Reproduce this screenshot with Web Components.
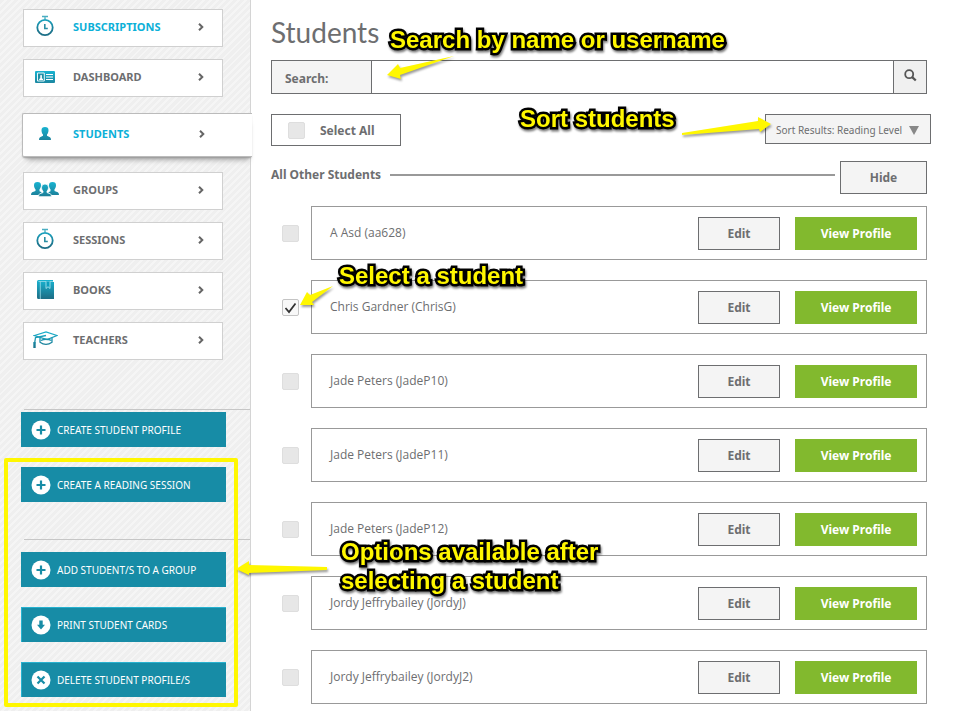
<!DOCTYPE html>
<html lang="en">
<head>
<meta charset="utf-8">
<title>Students</title>
<style>
  body {
    margin: 0;
    background: #fff;
    color: #6d6e70;
    font-family: "Noto Sans", sans-serif;
    font-size: 11px;
  }
</style>
</head>
<body>
<students-page></students-page>

<script>
const icons = {
  stopwatch: `<svg width="20" height="24" viewBox="0 0 20 24" fill="none" stroke="url(#g)">
    <path d="M7 1.5h6" stroke="#4aaec2" stroke-width="1.5"/><path d="M10 2v2" stroke="#7fc5d2" stroke-width="2"/>
    <circle cx="10" cy="12.5" r="7.7" stroke-width="1.8"/><path d="M9.8 9v4.5h3" stroke="#2a8ea3" stroke-width="1.6"/></svg>`,
  card: `<svg width="20" height="12" viewBox="0 0 20 12"><rect width="20" height="12" rx="1" fill="url(#g)"/>
    <path d="M2.5 2h6.8v8H2.5z" fill="#1b8fa6" stroke="#e6f7fa"/>
    <path d="M4.2 9V8l1.1-.7V4.6Q6 3 6.9 4.6v2.7L8 8v1z" fill="#fff"/>
    <path d="M11 3.5h7M11 6h7M11 8.5h7" stroke="#fff"/></svg>`,
  person: `<svg width="12" height="13" viewBox="0 0 12 13"><path fill="url(#g)" d="M2.500 3.200Q2.500 0 6 0t3.500 3.200C9.500 5.600 8.600 6.800 8 7.500v1.300l3 1.400q1 .6 1 2.800H0q0-2.200 1-2.800l3-1.400V7.500C3.400 6.800 2.500 5.600 2.500 3.200z"/></svg>`,
  group: `<svg width="28" height="15" viewBox="0 0 28 15" fill="url(#g)">
    <path d="M3 3.200Q3 0 6.500 0t3.500 3.200c0 2.300-.9 3.300-1.500 4v2l2 1V13H0q0-2.400 1.200-2.800l3.300-1.300V7.200C3.900 6.500 3 5.500 3 3.200z"/>
    <path d="M25 3.200Q25 0 21.500 0T18 3.200c0 2.300.9 3.300 1.500 4v2l-2 1V13H28q0-2.400-1.200-2.800l-3.300-1.300V7.200c.6-.7 1.500-1.700 1.500-4z"/>
    <path stroke="#fff" stroke-width=".8" d="M10.500 5.200Q10.500 2 14 2t3.500 3.200c0 2.200-.9 3.200-1.500 3.900v1.500l3.400 1.200q1 .6 1 2.900H7.600q0-2.300 1-2.900L12 10.600V9.100c-.6-.7-1.500-1.700-1.500-3.900z"/></svg>`,
  book: `<svg width="17" height="19" viewBox="0 0 17 19"><path fill="url(#g)" d="M1.500 0H16v2h1v17H1.500Q0 19 0 17.500v-16Q0 0 1.500 0z"/>
    <path d="M1.500 1.500H16M3.300 1.500V19" stroke="#9adbe7" stroke-width=".8"/><path fill="#0b9dbd" stroke="#b9eaf2" stroke-width=".8" d="M9 1.500v7l2-1.800 2 1.800v-7"/></svg>`,
  cap: `<svg width="25" height="18" viewBox="0 0 25 18" fill="none" stroke="url(#g)" stroke-width="1.300">
    <path d="M1.500 4.500 13 1l11 3.500-10 4z"/><path d="M7 6.500v4.700q6 4.300 12 0V6.500"/><path d="M8 9.500q5-2.500 10.500 0"/>
    <path d="M13 4.500 2.500 6.500 1.500 13"/><path d="M1.500 11v6" stroke-width="2.400"/></svg>`,
  chevron: `<svg width="6" height="8" viewBox="0 0 6 8" fill="none" stroke="#666" stroke-width="2"><path d="M1 .8 4.300 4 1 7.200"/></svg>`,
  search: `<svg width="13" height="13" viewBox="0 0 13 13" fill="none" stroke="#555"><circle cx="5.200" cy="5.200" r="4" stroke-width="1.800"/><path d="m8.200 8.200 3.600 3.300" stroke-width="2.300"/></svg>`,
  plus: `<svg width="20" height="20" viewBox="0 0 20 20"><circle cx="10" cy="10" r="9.500" fill="#fff"/><path d="M10 5.500v9M5.500 10h9" stroke="#178ca6" stroke-width="2.200"/></svg>`,
  down: `<svg width="20" height="20" viewBox="0 0 20 20"><circle cx="10" cy="10" r="9.500" fill="#fff"/><path d="M8.300 5.500h3.400v4.200h2.300L10 14.500 6 9.700h2.300z" fill="#178ca6"/></svg>`,
  cross: `<svg width="20" height="20" viewBox="0 0 20 20"><circle cx="10" cy="10" r="9.500" fill="#fff"/><path d="m6.500 6.500 7 7m0-7-7 7" stroke="#178ca6" stroke-width="2.200"/></svg>`
};

const gradient = `<defs><linearGradient id="g" gradientUnits="userSpaceOnUse" x1="0" y1="0" x2="0" y2="18"><stop offset="0" stop-color="#18b3d1"/><stop offset="1" stop-color="#1d7088"/></linearGradient></defs>`;

class AppIcon extends HTMLElement {
  connectedCallback() {
    const svg = icons[this.getAttribute("name")];
    this.attachShadow({ mode: "open" }).innerHTML = `
      <style>
        :host { display: inline-flex; align-items: center; justify-content: center; }
        svg { display: block; }
      </style>
      ${svg.replace("</svg>", gradient + "</svg>")}
    `;
  }
}
customElements.define("app-icon", AppIcon);

// Sidebar link
class MenuItem extends HTMLElement {
  connectedCallback() {
    this.attachShadow({ mode: "open" }).innerHTML = `
      <style>
        :host { display: block; margin: 0 27px 12px 23px; }
        a {
          display: flex;
          align-items: center;
          box-sizing: border-box;
          height: 38px;
          padding: 0 18px 3px 7px;
          background: #fff;
          border: 1px solid #d0d0d0;
          color: #6d6e70;
          font-size: 11px;
          font-weight: bold;
          text-decoration: none;
        }
        .icon { width: 28px; margin-right: 14px; }
        span { flex: 1; }
        :host([highlight]) a, :host([selected]) a { color: #0cb0d8; }
        :host([selected]) { margin: 16px -2px 15px 22px; position: relative; }
        :host([selected]) a {
          height: 44px;
          padding-left: 8px;
          padding-right: 47px;
          border-color: #bbb;
          border-right: 0;
          border-radius: 2px 0 0 2px;
          box-shadow: 0 2px 2px -1px #999, 1px 7px 5px -4px #aaa;
        }
      </style>
      <a href="#">
        <app-icon class="icon" name="${this.getAttribute("icon")}"></app-icon>
        <span><slot></slot></span>
        <app-icon name="chevron"></app-icon>
      </a>
    `;
  }
}
customElements.define("menu-item", MenuItem);

// Teal button below the menu
class ActionButton extends HTMLElement {
  connectedCallback() {
    this.attachShadow({ mode: "open" }).innerHTML = `
      <style>
        :host { display: block; margin: 0 24px 20px 21px; }
        button {
          display: flex;
          align-items: center;
          gap: 6px;
          width: 100%;
          height: 35px;
          padding: 0 10px;
          background: #178ca6;
          border: 0;
          color: #fff;
          font: 10px "Noto Sans", sans-serif;
          white-space: nowrap;
        }
        :host([edge]) button { box-shadow: inset 1px 1px #27b1cf; }
      </style>
      <button type="button"><app-icon name="${this.getAttribute("icon")}"></app-icon><slot></slot></button>
    `;
  }
}
customElements.define("action-button", ActionButton);

class SideBar extends HTMLElement {
  connectedCallback() {
    this.attachShadow({ mode: "open" }).innerHTML = `
      <style>
        :host {
          display: block;
          box-sizing: border-box;
          flex: 0 0 251px;
          padding-top: 9px;
          border-right: 1px solid #d4d4d4;
          background: repeating-linear-gradient(135deg, #efefef 0 3px, #f5f5f5 3px 5px);
        }
        hr { margin: 0 0 0 24px; border: 0; border-top: 1px solid #c6c6c6; }
        .first { margin-top: 49px; margin-bottom: 2px; }
        .second { margin-top: 37px; margin-bottom: 12px; }
      </style>
      <nav>
        <menu-item icon="stopwatch" highlight>SUBSCRIPTIONS</menu-item>
        <menu-item icon="card">DASHBOARD</menu-item>
        <menu-item icon="person" selected>STUDENTS</menu-item>
        <menu-item icon="group">GROUPS</menu-item>
        <menu-item icon="stopwatch">SESSIONS</menu-item>
        <menu-item icon="book">BOOKS</menu-item>
        <menu-item icon="cap">TEACHERS</menu-item>
      </nav>
      <hr class="first">
      <action-button icon="plus">CREATE STUDENT PROFILE</action-button>
      <action-button icon="plus">CREATE A READING SESSION</action-button>
      <hr class="second">
      <action-button icon="plus">ADD STUDENT/S TO A GROUP</action-button>
      <action-button icon="down" edge>PRINT STUDENT CARDS</action-button>
      <action-button icon="cross" edge>DELETE STUDENT PROFILE/S</action-button>
    `;
  }
}
customElements.define("side-bar", SideBar);

const buttonStyles = `
  button {
    box-sizing: border-box;
    height: 33px;
    padding: 0;
    background: #f4f4f4;
    border: 1px solid #6d6e70;
    color: #6d6e70;
    font: bold 12px "Noto Sans", sans-serif;
  }
`;

const checkboxStyles = `
  input[type=checkbox] {
    appearance: none;
    box-sizing: border-box;
    flex: none;
    width: 17px;
    height: 17px;
    margin: 0;
    background: #e7e7e7;
    border: 1px solid #dedede;
    border-radius: 2px;
  }
  input[type=checkbox]:checked {
    background: #f8f8f8 url('data:image/svg+xml,<svg xmlns="http://www.w3.org/2000/svg" viewBox="0 0 15 15"><path d="m2.500 8 3.500 4 6.500-8.500" fill="none" stroke="%23333" stroke-width="1.800"/></svg>');
    border-color: #c4c4c4;
  }
`;

class StudentRow extends HTMLElement {
  connectedCallback() {
    this.attachShadow({ mode: "open" }).innerHTML = `
      <style>
        :host { display: flex; align-items: center; gap: 12px; padding-left: 11px; }
        ${buttonStyles}
        ${checkboxStyles}
        .box {
          display: flex;
          align-items: center;
          flex: 1;
          gap: 15px;
          box-sizing: border-box;
          height: 54px;
          padding: 0 9px 0 18px;
          border: 1px solid #999;
        }
        label { flex: 1; padding-bottom: 2px; font-size: 12px; font-family: "Open Sans", sans-serif; }
        .edit { width: 82px; }
        .view { width: 122px; background: #82b92e; border: 0; color: #fff; }
      </style>
      <input type="checkbox" id="pick" ${this.hasAttribute("checked") ? "checked" : ""}>
      <div class="box">
        <label for="pick"><slot></slot></label>
        <button type="button" class="edit">Edit</button>
        <button type="button" class="view">View Profile</button>
      </div>
    `;
  }
}
customElements.define("student-row", StudentRow);

class SearchBar extends HTMLElement {
  connectedCallback() {
    this.attachShadow({ mode: "open" }).innerHTML = `
      <style>
        :host { display: block; }
        form { display: flex; box-sizing: border-box; height: 34px; border: 1px solid #6d6e70; }
        label {
          display: flex;
          align-items: center;
          box-sizing: border-box;
          width: 100px;
          padding: 3px 0 0 13px;
          background: #f4f4f4;
          border-right: 1px solid #6d6e70;
          font: bold 12px "Noto Sans", sans-serif;
        }
        input { flex: 1; min-width: 0; padding: 0 10px; border: 0; font-size: 13px; }
        button { width: 33px; padding: 0; background: #f0f0f0; border: 0; border-left: 1px solid #6d6e70; }
      </style>
      <form>
        <label for="query">Search:</label>
        <input type="text" id="query">
        <button type="button" aria-label="Search"><app-icon name="search"></app-icon></button>
      </form>
    `;
  }
}
customElements.define("search-bar", SearchBar);

class SortBox extends HTMLElement {
  connectedCallback() {
    this.attachShadow({ mode: "open" }).innerHTML = `
      <style>
        :host {
          display: flex;
          align-items: center;
          justify-content: space-between;
          box-sizing: border-box;
          width: 166px;
          height: 30px;
          padding: 2px 11px 0 10px;
          background: #f4f4f4;
          border: 1px solid #6d6e70;
          font-size: 10px;
        }
        select {
          appearance: none;
          width: 82px;
          padding: 0;
          border: 0;
          background: url('data:image/svg+xml,<svg xmlns="http://www.w3.org/2000/svg" width="10" height="9"><path d="M0 0h10L5 9z" fill="%23888"/></svg>') no-repeat right center;
          color: inherit;
          font: inherit;
        }
      </style>
      <label for="sort">Sort Results:</label>
      <select id="sort"><option>Reading Level</option></select>
    `;
  }
}
customElements.define("sort-box", SortBox);

class StudentList extends HTMLElement {
  connectedCallback() {
    this.attachShadow({ mode: "open" }).innerHTML = `
      <style>
        :host { display: block; flex: 1; min-width: 0; padding: 12px 27px 7px 20px; }
        ${buttonStyles}
        ${checkboxStyles}
        h1 { margin: 0 0 8px; font: 28px/40px Lato, sans-serif; }
        .tools { display: flex; justify-content: space-between; align-items: flex-start; margin: 20px -4px 15px 0; }
        .all {
          display: flex;
          align-items: center;
          gap: 15px;
          box-sizing: border-box;
          width: 130px;
          height: 32px;
          padding-left: 16px;
          border: 1px solid #6d6e70;
          font: bold 12px "Noto Sans", sans-serif;
        }
        .title { display: flex; align-items: center; gap: 9px; margin-bottom: 12px; }
        h2 { margin: 0; font: bold 12px "Noto Sans", sans-serif; }
        hr { flex: 1; height: 2px; margin: 0 -4px 0 0; border: 0; background: #999; }
        .title h2, .title hr { margin-bottom: 6px; }
        .title button { width: 87px; }
        .rows { display: grid; gap: 20px; }
      </style>
      <h1>Students</h1>
      <search-bar></search-bar>
      <div class="tools">
        <label class="all"><input type="checkbox">Select All</label>
        <sort-box></sort-box>
      </div>
      <div class="title">
        <h2>All Other Students</h2>
        <hr>
        <button type="button">Hide</button>
      </div>
      <div class="rows"><slot></slot></div>
    `;
  }
}
customElements.define("student-list", StudentList);

// Help notes laid over the page
class HelpNotes extends HTMLElement {
  connectedCallback() {
    this.attachShadow({ mode: "open" }).innerHTML = `
      <style>
        :host { position: absolute; inset: 0; pointer-events: none; overflow: hidden; }
        p {
          position: absolute;
          margin: 0;
          color: #fff700;
          font: bold 24px/29px "Liberation Sans", Arial, sans-serif;
          white-space: nowrap;
          -webkit-text-stroke: 5px #000;
          paint-order: stroke fill;
          stroke-linejoin: round;
          filter: drop-shadow(1px 2px 1px #0008);
        }
        .frame {
          position: absolute;
          left: 4px;
          top: 458px;
          box-sizing: border-box;
          width: 234px;
          height: 249px;
          border: 4px solid #fff700;
          border-radius: 2px;
        }
        svg { position: absolute; left: 0; top: 0; filter: drop-shadow(1px 2px 1px #0006); }
      </style>
      <div class="frame"></div>
      <svg width="954" height="711" fill="#fff700">
        <path d="M454 56 400 68 398 64 387 75 401 79 400 75z"/>
        <path d="M682 133 758 121 758 117 771 124 760 132 759 129 682 135z"/>
        <path d="M333 286 310 295 307 292 300 305 314 305 312 302z"/>
        <path d="M327 567 249 565 249 561 236 569 249 575 249 573 327 570z"/>
      </svg>
      <p style="left: 390px; top: 25px">Search by name or username</p>
      <p style="left: 520px; top: 104px">Sort students</p>
      <p style="left: 339px; top: 261px">Select a student</p>
      <p style="left: 341px; top: 537px">Options available after<br>selecting a student</p>
    `;
  }
}
customElements.define("help-notes", HelpNotes);

class StudentsPage extends HTMLElement {
  connectedCallback() {
    this.attachShadow({ mode: "open" }).innerHTML = `
      <style>
        :host { display: flex; position: relative; min-height: 100vh; overflow: hidden; }
      </style>
      <side-bar></side-bar>
      <student-list>
        <student-row>A Asd (aa628)</student-row>
        <student-row checked>Chris Gardner (ChrisG)</student-row>
        <student-row>Jade Peters (JadeP10)</student-row>
        <student-row>Jade Peters (JadeP11)</student-row>
        <student-row>Jade Peters (JadeP12)</student-row>
        <student-row>Jordy Jeffrybailey (JordyJ)</student-row>
        <student-row>Jordy Jeffrybailey (JordyJ2)</student-row>
      </student-list>
      <help-notes></help-notes>
    `;
  }
}
customElements.define("students-page", StudentsPage);
</script>
</body>
</html>
